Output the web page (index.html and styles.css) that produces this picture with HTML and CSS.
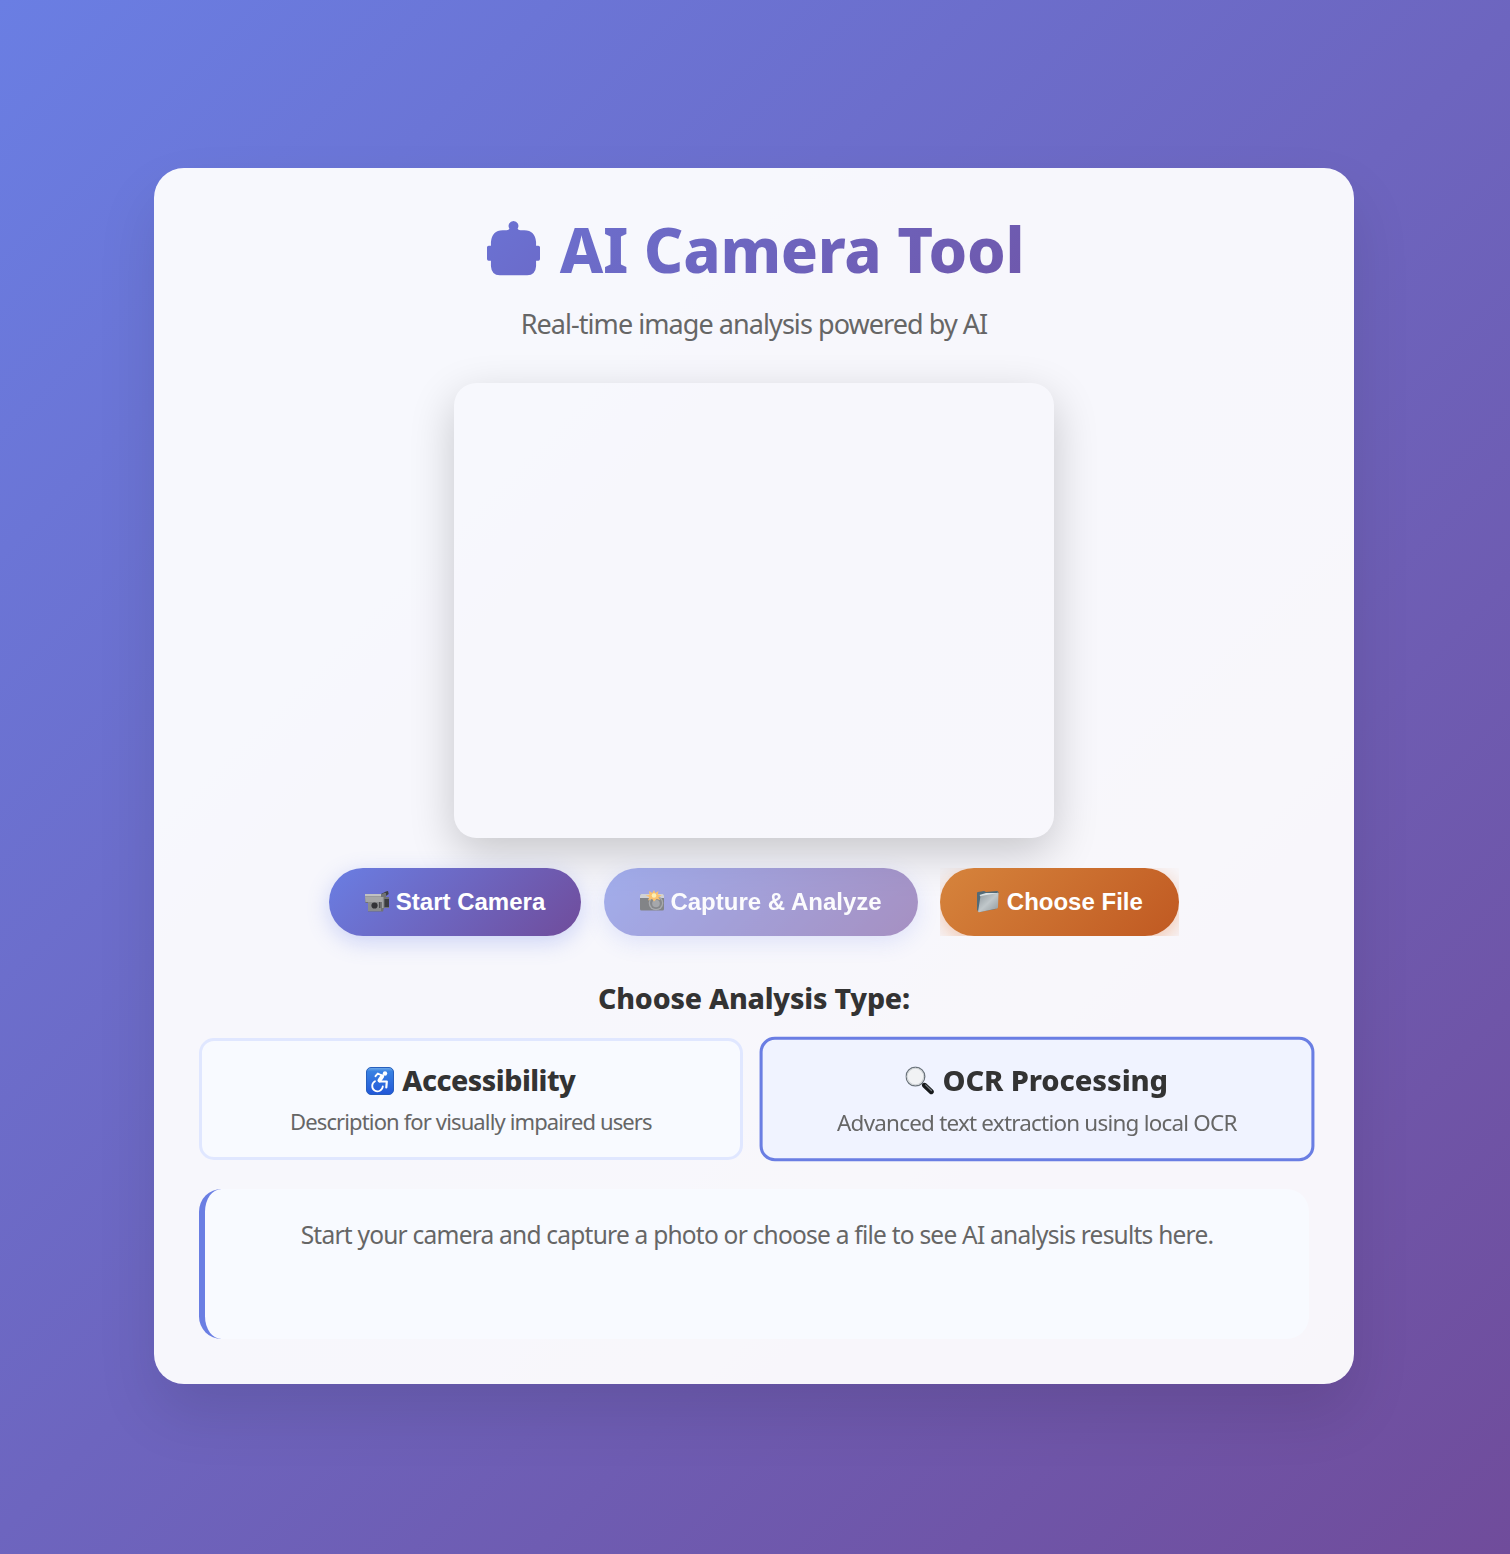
FILE: index.html
```html
<!DOCTYPE html>
<html lang="en">
<head>
<meta charset="utf-8">
<title>AI Camera Tool</title>
<link rel="stylesheet" href="styles.css">
</head>
<body>
<main class="card">
  <h1 class="title">
    <svg class="robot" viewBox="0 0 54 56" aria-hidden="true">
      <defs><linearGradient id="robotFill" x1="0" y1="0" x2="1" y2="1"><stop offset="0" stop-color="#6b72d3"/><stop offset="1" stop-color="#6b6bca"/></linearGradient></defs>
      <path fill="url(#robotFill)" d="M27 0a5 5 0 0 1 4.200 7.700q.3 1.500 2.800 1.700h4q11 .3 12 12v3.800h2.300q1.700 0 1.700 1.600v12q0 1.600-1.700 1.600H50V46q-.6 9-9 9.200H13Q4.600 55 4 46v-5.600H1.700Q0 40.400 0 38.800v-12q0-1.600 1.700-1.600H4v-3.800Q5 9.700 16 9.400h4q2.500-.2 2.800-1.700A5 5 0 0 1 27 0z"/>
    </svg>
    <span class="title-text">AI Camera Tool</span>
  </h1>
  <p class="subtitle">Real-time image analysis powered by AI</p>

  <div class="preview"></div>

  <div class="actions">
    <button class="btn" type="button">
      <svg class="btn-icon" viewBox="0 0 24 24" aria-hidden="true">
        <path d="M14 5 21 1.500 23 1l.7 3-5.700 4z" fill="#3d3e42"/>
        <path d="M0 4h17l2-1h2v4h3v11h-5l-1 3.500H3V13H.5z" fill="#707274"/>
        <path d="M0 4h16v2.500H0z" fill="#c0c1c2"/>
        <path d="M0 7h17v5H.5z" fill="#a5a6a7"/>
        <path d="M3 12h13v9H3z" fill="#8a8c8e"/>
        <path d="M19.500 9H24v8h-4.500z" fill="#3b3c40"/>
        <path d="M17 7h1.500v11H17z" fill="#a0a1a4"/>
        <circle cx="9.500" cy="15.500" r="3.100" fill="#323337"/>
        <path d="M14 12h1.500v6H14z" fill="#4c4d50"/>
      </svg>
      <span>Start Camera</span>
    </button>
    <button class="btn" type="button" disabled>
      <svg class="btn-icon" viewBox="0 0 24 24" aria-hidden="true">
        <path d="M0 6q0-2 2-2h20q2 0 2 2v13q0 1.500-1.500 1.500h-21Q0 20.500 0 19z" fill="#36383a"/>
        <path d="M0 8V5.500q0-1.500 1.500-1.500h21Q24 4 24 5.500V8z" fill="#b8bbbd"/>
        <circle cx="16" cy="13" r="7.300" fill="#75787a"/>
        <circle cx="16" cy="13" r="6" fill="#3c3f41"/>
        <circle cx="16" cy="13.500" r="3.800" fill="#707376"/>
        <path d="M14 0l1.400 3L18.500 1l-.8 3.500 4 .8-3.300 2 2 2.700-3.800-1-2.600 2.500-2-2.700-4 1.700L9.300 7 5.500 5.500l4-.6L9 1l3.300 2z" fill="#ff9f12"/>
        <circle cx="14" cy="5.500" r="2.300" fill="#ffed86"/>
      </svg>
      <span>Capture &amp; Analyze</span>
    </button>
    <div class="file-picker">
      <button class="btn btn-file" type="button">
        <svg class="btn-icon" viewBox="0 0 24 24" aria-hidden="true">
          <defs><linearGradient id="folderFill" x1="0" y1="0" x2="1" y2="1"><stop offset="0" stop-color="#8f989d"/><stop offset=".5" stop-color="#c0c7ca"/><stop offset="1" stop-color="#8f979b"/></linearGradient></defs>
          <path d="M1 3q0-1 1-1l6-1 2 1 11-1q1.500 0 1.500 1.500L20 19 3 22 1 20z" fill="#526a77"/>
          <path d="M3.500 5 10 3h11l1-.5-.5 2L5 7z" fill="#dce2e4"/>
          <path d="M4.500 6 22.500 3 22 17q0 1-1 1.500L3 22.300q-1 0-.9-1z" fill="url(#folderFill)"/>
        </svg>
        <span>Choose File</span>
      </button>
    </div>
  </div>

  <h2 class="section-title"><span>Choose Analysis Type:</span></h2>
  <div class="options">
    <section class="option">
      <h3 class="option-title">
        <svg class="option-icon" viewBox="0 0 28 28" aria-hidden="true">
          <defs><linearGradient id="badgeFill" x1="0" y1="0" x2="0" y2="1"><stop offset="0" stop-color="#75aeea"/><stop offset=".14" stop-color="#3881e2"/><stop offset="1" stop-color="#2257d8"/></linearGradient></defs>
          <rect x=".5" y=".5" width="27" height="27" rx="4.500" fill="url(#badgeFill)" stroke="#275fbd"/>
          <circle cx="19" cy="6.500" r="2.200" fill="#fff"/>
          <g fill="none" stroke="#fff" stroke-linecap="round" stroke-linejoin="round">
            <path d="M9.500 9.200 11.800 6.500 17 9" stroke-width="1.900"/>
            <path d="M16.200 9.300 13.500 13.300" stroke-width="4"/>
            <path d="M13.500 14.500h7.300l-.5 6" stroke-width="2.200"/>
            <path d="M9 14.300a5.300 5.300 0 1 0 7.800 5" stroke-width="1.800"/>
          </g>
        </svg>
        <span>Accessibility</span>
      </h3>
      <p class="option-text desc-accessibility">Description for visually impaired users</p>
    </section>
    <section class="option option-selected">
      <h3 class="option-title">
        <svg class="option-icon" viewBox="0 0 28 28" aria-hidden="true">
          <path d="m16 16 3 3" stroke="#777b80" stroke-width="2"/>
          <path d="m18.800 18.600 6.500 6.200" stroke="#17191b" stroke-width="5" stroke-linecap="round"/>
          <path d="m19.800 18.200 5.700 5.500" stroke="#777c81" stroke-width="1.200" stroke-linecap="round"/>
          <circle cx="9.800" cy="10" r="9.200" fill="#f1f2f4" stroke="#6b737b" stroke-width="1.300"/>
          <circle cx="9.800" cy="10" r="8.100" fill="none" stroke="#cfd3d6"/>
        </svg>
        <span>OCR Processing</span>
      </h3>
      <p class="option-text desc-ocr">Advanced text extraction using local OCR</p>
    </section>
  </div>

  <div class="results"><p class="results-text">Start your camera and capture a photo or choose a file to see AI analysis results here.</p></div>
</main>
</body>
</html>
```
FILE: styles.css
```css
* { box-sizing: border-box; margin: 0; padding: 0; }

body {
  min-height: 1554px;
  padding: 168px 156px 170px 154px;
  background: linear-gradient(135deg, #6a7ee3 0%, #704c9b 100%);
  font-family: "Noto Sans", Tahoma, sans-serif;
  color: #333;
}

.card {
  width: 1200px;
  height: 1216px;
  padding: 45px;
  border-radius: 30px;
  background: rgba(255, 255, 255, 0.95);
  box-shadow: 0 30px 60px rgba(0, 0, 0, 0.1);
  text-align: center;
  white-space: nowrap;
}

.title {
  display: flex;
  justify-content: center;
  gap: 20px;
  height: 73px;
  padding-left: 3px;
  line-height: 73px;
  font-size: 61.5px;
  font-weight: 800;
  letter-spacing: -0.3px;
  background: linear-gradient(135deg, #6a7ee3, #704c9b);
  -webkit-background-clip: text;
  background-clip: text;
  color: transparent;
}
.robot { width: 53px; height: 55px; margin-top: 8px; }

.subtitle {
  margin-top: 21px;
  line-height: 33px;
  font-size: 27px;
  letter-spacing: -0.94px;
  color: #666;
}

.preview {
  width: 600px;
  height: 455px;
  margin: 43px auto 0;
  border-radius: 22.5px;
  box-shadow: 0 15px 45px rgba(0, 0, 0, 0.2);
}

.actions {
  display: flex;
  justify-content: center;
  gap: 22.5px;
  margin-top: 30px;
}
.btn {
  display: flex;
  align-items: center;
  gap: 6.7px;
  height: 68px;
  padding: 0 36px;
  border: 0;
  border-radius: 37.5px;
  background: linear-gradient(135deg, #6a7ee3, #704c9b);
  box-shadow: 0 6px 22.5px rgba(102, 126, 234, 0.3);
  font: 700 24px "Liberation Sans", Arial, sans-serif;
  color: #fff;
}
.btn:disabled { opacity: 0.6; }
.btn-icon { width: 24px; height: 24px; }
.file-picker { overflow: hidden; }
.btn-file {
  background: linear-gradient(135deg, #d6843c, #c05922);
  box-shadow: 0 6px 22.5px rgba(230, 119, 50, 0.4);
}

.section-title {
  margin-top: 45px;
  line-height: 34px;
  font-size: 28.5px;
  font-weight: 800;
  letter-spacing: -0.2px;
}

.options {
  display: grid;
  grid-template-columns: 1fr 1fr;
  gap: 22.5px;
  margin-top: 23px;
}
.option {
  height: 121.5px;
  padding: 22px;
  border: 3px solid #e0e7ff;
  border-radius: 15px;
  background: #f8faff;
}
.option-selected {
  border-color: #6a7ee3;
  background: #f0f3ff;
  transform: scale(1.02);
}
.option-title {
  display: flex;
  justify-content: center;
  gap: 8px;
  height: 33px;
  line-height: 35px;
  font-size: 28.5px;
  font-weight: 800;
  letter-spacing: -0.5px;
}
.option-selected .option-title { letter-spacing: -0.12px; }
.option-icon { width: 28px; height: 28px; margin-top: 4px; }
.option-text {
  margin-top: 12px;
  line-height: 26px;
  font-size: 22px;
  color: #666;
}
.desc-accessibility { letter-spacing: -0.87px; }
.desc-ocr { letter-spacing: -0.76px; }

.results {
  height: 150px;
  margin-top: 29.5px;
  padding: 30px;
  border-left: 6px solid #6a7ee3;
  border-radius: 22.5px;
  background: #f8faff;
}
.results-text { line-height: 31px; font-size: 24.5px; letter-spacing: -0.77px; color: #666; }
```
